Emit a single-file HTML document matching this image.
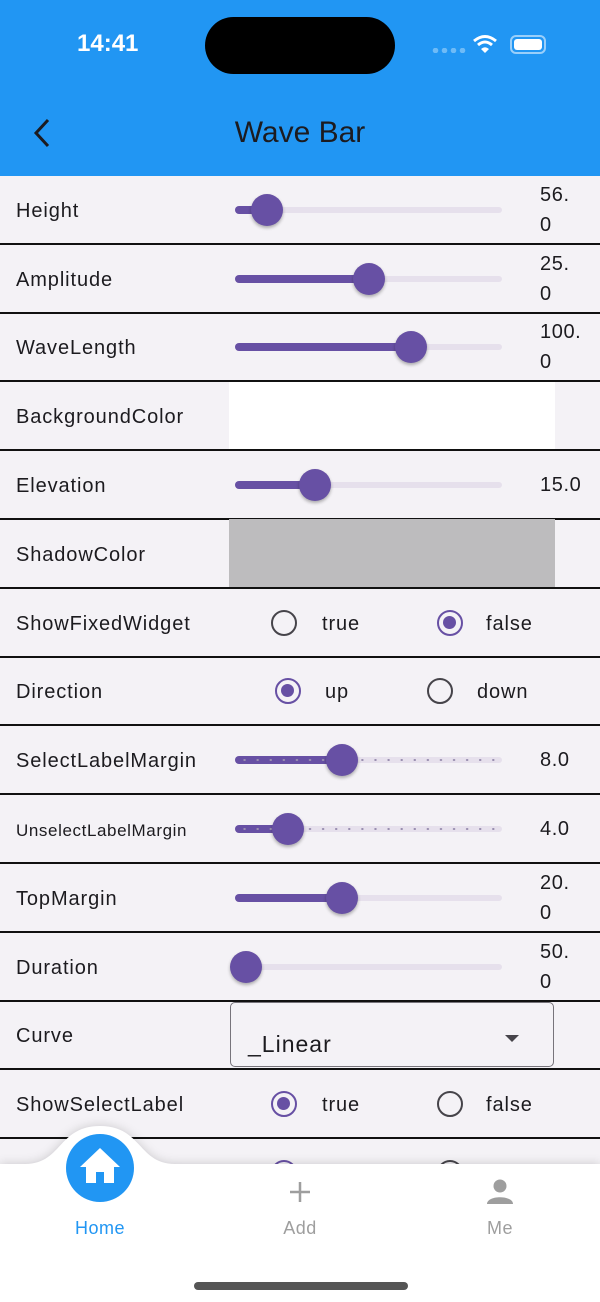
<!DOCTYPE html>
<html><head><meta charset="utf-8"><style>
*{margin:0;padding:0;box-sizing:border-box}
body{width:600px;height:1302px;overflow:hidden;background:#F4F2F6;font-family:"Liberation Sans",sans-serif;position:relative;color:#1c1b1f}
.hdr{position:absolute;left:0;top:0;width:600px;height:176px;background:#2196F3}
.row{position:absolute;left:0;width:600px;height:69px;border-bottom:2px solid #111}
.lbl{position:absolute;left:16px;top:2px;height:67px;line-height:67px;font-size:20px;letter-spacing:0.9px}
.tr{position:absolute;left:235px;width:267px;height:6px;top:31px;border-radius:3px;background:#E6E0EC}
.ac{position:absolute;left:235px;height:8px;top:30px;border-radius:4px;background:#6750A4}
.th{position:absolute;width:32px;height:32px;border-radius:50%;background:#6750A4;top:18px;box-shadow:0 2px 3px rgba(0,0,0,.3)}
.val{position:absolute;left:540px;font-size:20px;line-height:30px;letter-spacing:0.6px}
.rad{position:absolute;width:26px;height:26px;border-radius:50%;border:2.5px solid #46444a;top:21px}
.rad.on{border-color:#6750A4}
.rad.on::after{content:"";position:absolute;left:4px;top:4px;width:13px;height:13px;border-radius:50%;background:#6750A4}
.rt{position:absolute;top:2px;line-height:67px;font-size:20px;letter-spacing:0.9px}
.dots{position:absolute;top:33px;left:238px;width:262px;height:2px;background-image:radial-gradient(circle,#9a8fb0 1px,transparent 1.3px);background-size:13.1px 2px}
</style></head><body>
<div class="hdr">
<div style="position:absolute;left:77px;top:30px;font-size:24px;font-weight:bold;color:#fff">14:41</div>
<div style="position:absolute;left:205px;top:17px;width:190px;height:57px;border-radius:29px;background:#000"></div>
<div style="position:absolute;left:431px;top:48px;width:36px;height:5px;background-image:radial-gradient(circle,rgba(255,255,255,.35) 2.5px,transparent 3px);background-size:9px 5px"></div>
<svg style="position:absolute;left:472px;top:34px" width="26" height="20" viewBox="0 0 26 20"><path d="M2 7 Q13 -2 24 7" stroke="#fff" stroke-width="3" fill="none"/><path d="M6 11 Q13 5 20 11" stroke="#fff" stroke-width="3" fill="none"/><path d="M9 15 L13 19 L17 15 Q13 11.5 9 15Z" fill="#fff"/></svg>
<div style="position:absolute;left:510px;top:35px;width:36px;height:19px;border:2px solid rgba(255,255,255,.55);border-radius:6px"><div style="position:absolute;left:2px;top:2px;right:2px;bottom:2px;background:#fff;border-radius:3px"></div></div>
<svg style="position:absolute;left:32px;top:118px" width="20" height="30" viewBox="0 0 20 30"><path d="M16 2 L4 15 L16 28" stroke="#1c1b1f" stroke-width="3" fill="none"/></svg>
<div style="position:absolute;left:0;width:600px;top:116px;text-align:center;font-size:30px;color:#1c1b1f">Wave Bar</div>
</div>

<div class="row" style="top:176px"><div class="lbl">Height</div><div class="tr"></div><div class="ac" style="width:32px"></div><div class="th" style="left:251px"></div><div class="val" style="top:4px">56.<br>0</div></div>
<div class="row" style="top:245px"><div class="lbl">Amplitude</div><div class="tr"></div><div class="ac" style="width:134px"></div><div class="th" style="left:353px"></div><div class="val" style="top:4px">25.<br>0</div></div>
<div class="row" style="top:313px"><div class="lbl">WaveLength</div><div class="tr"></div><div class="ac" style="width:176px"></div><div class="th" style="left:395px"></div><div class="val" style="top:4px">100.<br>0</div></div>
<div class="row" style="top:382px"><div class="lbl">BackgroundColor</div><div style="position:absolute;left:229px;top:0;width:326px;height:67px;background:#fff"></div></div>
<div class="row" style="top:451px"><div class="lbl">Elevation</div><div class="tr"></div><div class="ac" style="width:80px"></div><div class="th" style="left:299px"></div><div class="val" style="top:19px">15.0</div></div>
<div class="row" style="top:520px"><div class="lbl">ShadowColor</div><div style="position:absolute;left:229px;top:-1px;width:326px;height:68px;background:#BDBCBE"></div></div>
<div class="row" style="top:589px"><div class="lbl">ShowFixedWidget</div><div class="rad" style="left:271px"></div><div class="rt" style="left:322px">true</div><div class="rad on" style="left:437px"></div><div class="rt" style="left:486px">false</div></div>
<div class="row" style="top:657px"><div class="lbl">Direction</div><div class="rad on" style="left:275px"></div><div class="rt" style="left:325px">up</div><div class="rad" style="left:427px"></div><div class="rt" style="left:477px">down</div></div>
<div class="row" style="top:726px"><div class="lbl">SelectLabelMargin</div><div class="tr"></div><div class="ac" style="width:107px"></div><div class="dots"></div><div class="th" style="left:326px"></div><div class="val" style="top:19px">8.0</div></div>
<div class="row" style="top:795px"><div class="lbl" style="font-size:17px;letter-spacing:0.6px">UnselectLabelMargin</div><div class="tr"></div><div class="ac" style="width:53px"></div><div class="dots"></div><div class="th" style="left:272px"></div><div class="val" style="top:19px">4.0</div></div>
<div class="row" style="top:864px"><div class="lbl">TopMargin</div><div class="tr"></div><div class="ac" style="width:107px"></div><div class="th" style="left:326px"></div><div class="val" style="top:4px">20.<br>0</div></div>
<div class="row" style="top:933px"><div class="lbl">Duration</div><div class="tr"></div><div class="th" style="left:230px"></div><div class="val" style="top:4px">50.<br>0</div></div>
<div class="row" style="top:1001px"><div class="lbl">Curve</div><div style="position:absolute;left:230px;top:1px;width:324px;height:65px;border:1.5px solid #77747b;border-radius:5px"><div style="position:absolute;left:17px;top:28px;font-size:23px;letter-spacing:1px">_Linear</div><div style="position:absolute;left:274px;top:32px;width:0;height:0;border-left:7px solid transparent;border-right:7px solid transparent;border-top:7px solid #46444a"></div></div></div>
<div class="row" style="top:1070px"><div class="lbl">ShowSelectLabel</div><div class="rad on" style="left:271px"></div><div class="rt" style="left:322px">true</div><div class="rad" style="left:437px"></div><div class="rt" style="left:486px">false</div></div>
<div class="row" style="top:1139px;border:none"><div class="rad on" style="left:271px"></div><div class="rad" style="left:437px"></div></div>

<svg style="position:absolute;left:0;top:1100px" width="600" height="202" viewBox="0 1100 600 202">
<defs><filter id="s" x="-10%" y="-50%" width="120%" height="200%"><feGaussianBlur stdDeviation="5"/></filter></defs>
<path d="M0 1164 L25 1164 C62 1164 58 1126 100 1126 C142 1126 138 1164 175 1164 L600 1164 V1302 H0Z" fill="rgba(0,0,0,.18)" filter="url(#s)"/>
<path d="M0 1164 L25 1164 C62 1164 58 1126 100 1126 C142 1126 138 1164 175 1164 L600 1164 V1302 H0Z" fill="#fff"/>
<circle cx="100" cy="1168" r="34" fill="#2196F3"/>
<path d="M100 1148 L80 1167 L86 1167 L86 1183 L96 1183 L96 1172 L104 1172 L104 1183 L114 1183 L114 1167 L120 1167Z" fill="#fff"/>
<path d="M300 1182 V1202 M290 1192 H310" stroke="#9e9e9e" stroke-width="2.5"/>
<circle cx="500" cy="1186" r="6.5" fill="#9e9e9e"/>
<path d="M487 1204 C487 1195 513 1195 513 1204Z" fill="#9e9e9e"/>
<rect x="194" y="1282" width="214" height="8" rx="4" fill="#555"/>
</svg>
<div style="position:absolute;left:50px;width:100px;top:1218px;text-align:center;font-size:18px;color:#2196F3;letter-spacing:0.5px">Home</div>
<div style="position:absolute;left:250px;width:100px;top:1218px;text-align:center;font-size:18px;color:#9e9e9e;letter-spacing:0.5px">Add</div>
<div style="position:absolute;left:450px;width:100px;top:1218px;text-align:center;font-size:18px;color:#9e9e9e;letter-spacing:0.5px">Me</div>
</body></html>
